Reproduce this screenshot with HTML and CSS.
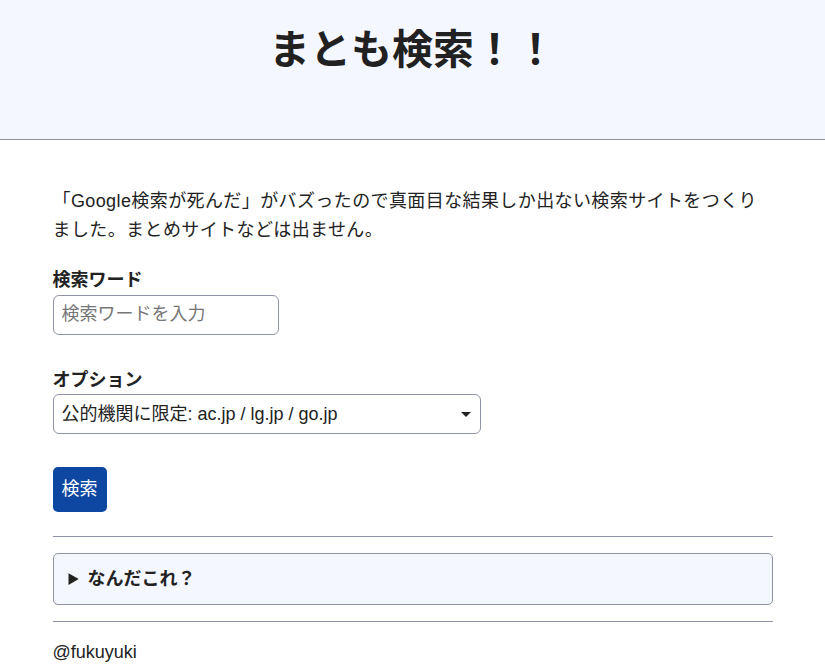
FILE: index.html
```html
<!DOCTYPE html>
<html lang="ja">
<head>
    <meta charset="UTF-8">
    <meta name="viewport" content="width=device-width, initial-scale=1.0">
    <title>まとも検索！！</title>
    <link rel="stylesheet" href="styles.css">
</head>
<body>
    <header>
        <h1>まとも検索！！</h1>
    </header>
    <main>
        <p class="intro">「Google検索が死んだ」がバズったので真面目な結果しか出ない検索サイトをつくりました。まとめサイトなどは出ません。</p>
        <form onsubmit="return false;">
            <div class="field">
                <label for="q">検索ワード</label>
                <input type="text" id="q" class="word" placeholder="検索ワードを入力">
            </div>
            <div class="field">
                <label for="opt">オプション</label>
                <div class="select-wrap">
                    <select id="opt">
                        <option>公的機関に限定: ac.jp / lg.jp / go.jp</option>
                        <option>制限なし</option>
                    </select>
                </div>
            </div>
            <button type="submit">検索</button>
        </form>
        <hr>
        <details>
            <summary>なんだこれ？</summary>
            <p>Google検索の結果を公的機関のドメインに絞り込みます。</p>
        </details>
        <hr>
        <footer>@fukuyuki</footer>
    </main>
</body>
</html>
```

FILE: styles.css
```css
body {
    font-family: 'Liberation Sans', 'Noto Sans CJK JP', sans-serif;
    margin: 0;
    padding: 0;
    background: #fff;
    color: #222;
    font-size: 18px;
    line-height: 1.6;
}
header {
    background: #f5f7ff;
    border-bottom: 1px solid #8e93a6;
    padding: 26px 0 64px;
    text-align: center;
}
h1 {
    margin: 0;
    font-size: 41px;
    line-height: 1.2;
    color: #212121;
}
main {
    max-width: 720px;
    margin: 0 auto;
}
.intro {
    margin: 47px 0 21px;
    letter-spacing: 0.4px;
}
label {
    display: block;
    font-weight: bold;
}
.field {
    margin-bottom: 31px;
}
.field:nth-child(2) {
    margin-bottom: 33px;
}
input, select {
    font-family: inherit;
    font-size: 18px;
    color: #222;
    height: 40px;
    box-sizing: border-box;
    border: 1px solid #8e93a6;
    border-radius: 6px;
    padding: 0 8px;
    background: #fff;
    display: block;
}
input.word {
    width: 226px;
}
input::placeholder {
    color: #777;
}
.select-wrap {
    position: relative;
    width: 428px;
}
select {
    width: 100%;
    -webkit-appearance: none;
    appearance: none;
}
.select-wrap::after {
    content: '';
    position: absolute;
    right: 10px;
    top: 18px;
    border-left: 5px solid transparent;
    border-right: 5px solid transparent;
    border-top: 5px solid #222;
    pointer-events: none;
}
button {
    font-family: inherit;
    font-size: 18px;
    line-height: 1.6;
    background: #0d47a1;
    color: #fff;
    border: none;
    border-radius: 5px;
    padding: 8px 9px;
    cursor: pointer;
    display: block;
}
hr {
    border: none;
    border-top: 1px solid #8e93a6;
    margin: 24px 0 16px;
}
details {
    background: #f5f7ff;
    border: 1px solid #8e93a6;
    border-radius: 5px;
    padding: 11px 15px 10px;
}
summary {
    font-weight: bold;
    cursor: pointer;
}
details + hr {
    margin-top: 16px;
}
footer {
    font-size: 18px;
    margin-top: 14px;
    padding-bottom: 20px;
}
```
